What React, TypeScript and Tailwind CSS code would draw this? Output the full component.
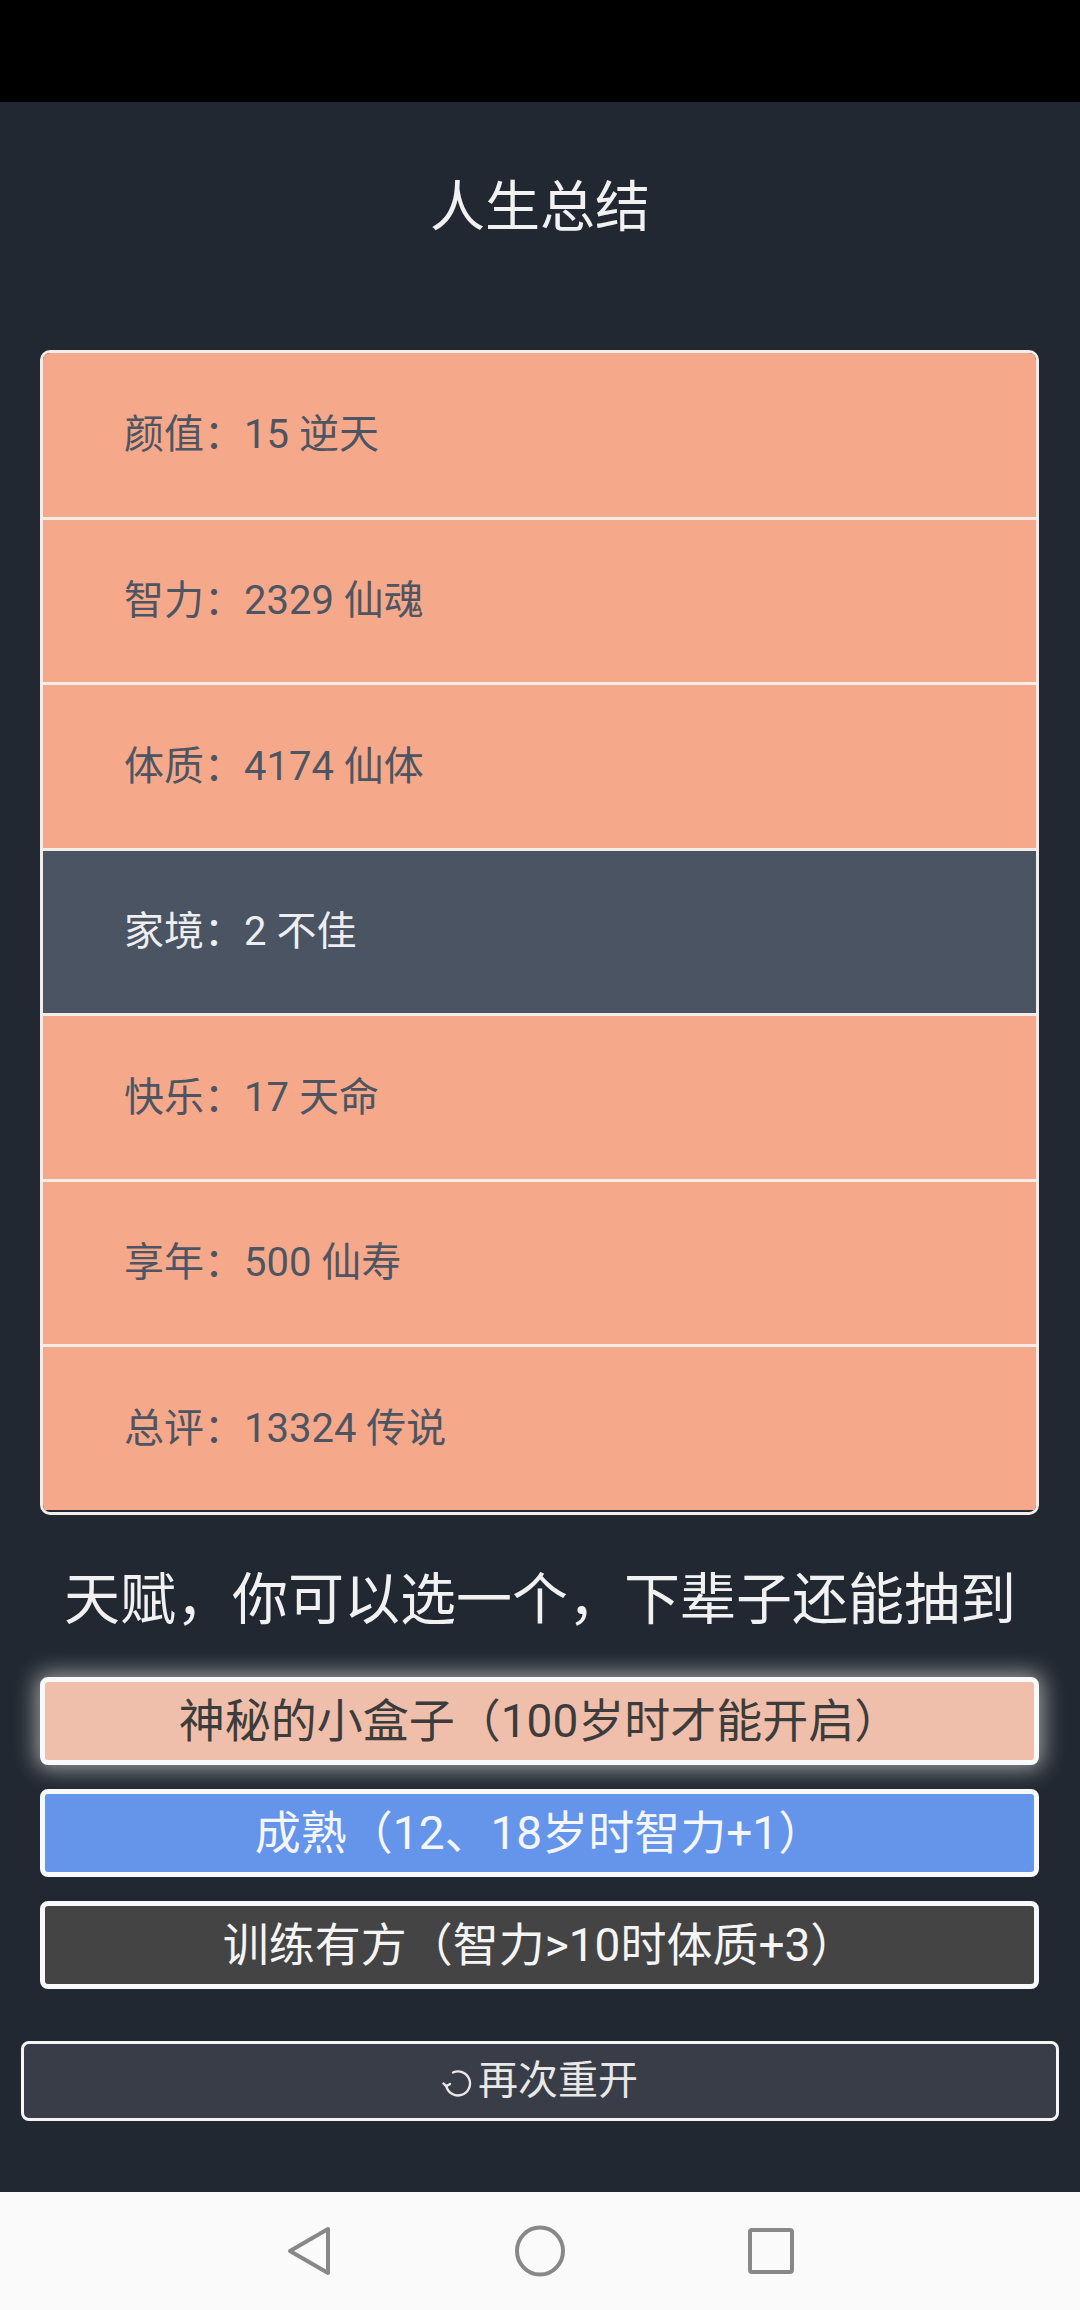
import React from "react";

const FONT = { fontFamily: 'Roboto, "Noto Sans CJK SC", "Noto Sans", sans-serif' };

const rows: { label: string; dark?: boolean; h: string }[] = [
  { label: "颜值：15 逆天", h: "h-[164px]" },
  { label: "智力：2329 仙魂", h: "h-[165px]" },
  { label: "体质：4174 仙体", h: "h-[166px]" },
  { label: "家境：2 不佳", dark: true, h: "h-[165px]" },
  { label: "快乐：17 天命", h: "h-[166px]" },
  { label: "享年：500 仙寿", h: "h-[165px]" },
  { label: "总评：13324 传说", h: "h-[166px]" },
];

export default function App() {
  return (
    <div className="w-[1080px] h-[2310px] flex flex-col overflow-hidden" style={FONT}>
      <div className="h-[102px] bg-black shrink-0" />
      <div className="flex-1 bg-[#222831] flex flex-col">
        <div className="h-[248px] pt-[72px]">
          <div className="text-center text-[55px] leading-[66px] text-[#f1f1f1]">人生总结</div>
        </div>

        <div className="ml-[40px] mr-[41px] border-[3px] border-[#f3ede9] rounded-[10px] overflow-hidden bg-[#222831]">
          {rows.map((r, i) => (
            <div
              key={i}
              className={
                r.h +
                " flex items-center pl-[81px] text-[40px] " +
                (i > 0 ? "border-t-[3px] border-[#f3ede9] " : "") +
                (i === rows.length - 1 ? "mb-[2px] " : "") +
                (r.dark ? "bg-[#4a5462] text-[#eceef1]" : "bg-[#f6a98a] text-[#4d5562]")
              }
            >
              {r.label}
            </div>
          ))}
        </div>

        <div className="pt-[52px] pb-[44px]">
          <div className="text-center text-[56px] leading-[66px] text-[#f1f1f1]">
            天赋，你可以选一个，下辈子还能抽到
          </div>
        </div>

        <div className="flex flex-col gap-[24px] ml-[40px] mr-[41px]">
          <div className="h-[88px] border-[5px] border-[#f8f9fa] rounded-[8px] bg-[#f0bfab] flex items-center justify-center text-[46px] text-[#3c3c3c] shadow-[0_0_22px_4px_rgba(255,255,255,0.55)]">
            神秘的小盒子（100岁时才能开启）
          </div>
          <div className="h-[88px] border-[5px] border-[#f8f9fa] rounded-[8px] bg-[#6495ea] flex items-center justify-center text-[46px] text-[#f4f6fa]">
            成熟（12、18岁时智力+1）
          </div>
          <div className="h-[88px] border-[5px] border-[#f8f9fa] rounded-[8px] bg-[#444444] flex items-center justify-center text-[46px] text-[#f4f4f4]">
            训练有方（智力&gt;10时体质+3）
          </div>
        </div>

        <div className="mt-[52px] mx-[21px] h-[80px] border-[3px] border-[#f3f4f6] rounded-[8px] bg-[#393d47] flex items-center justify-center text-[40px] text-[#e8e8e8]">
          <svg width="32" height="30" viewBox="0 0 32 30" className="mr-[4px] mt-[6px]" fill="none" stroke="#e8e8e8" strokeWidth="2.4" strokeLinecap="round">
            <path d="M11 3.5 A12 12 0 1 1 4.3 17" />
            <path d="M1.5 14.5 L4.3 17.2 L8 15" />
          </svg>
          <span>再次重开</span>
        </div>
      </div>

      <div className="h-[118px] shrink-0 bg-[#fafafa] flex items-center justify-center gap-[180px]">
        <svg width="50" height="52" viewBox="0 0 50 52" fill="none" stroke="#888888" strokeWidth="4" strokeLinejoin="round">
          <path d="M44 4 L44 48 L6 26 Z" />
        </svg>
        <svg width="52" height="52" viewBox="0 0 52 52" fill="none" stroke="#888888" strokeWidth="4">
          <ellipse cx="26" cy="26" rx="23" ry="23.5" />
        </svg>
        <svg width="50" height="50" viewBox="0 0 50 50" fill="none" stroke="#888888" strokeWidth="4" strokeLinejoin="round">
          <rect x="4" y="4" width="42" height="42" rx="2" />
        </svg>
      </div>
    </div>
  );
}
